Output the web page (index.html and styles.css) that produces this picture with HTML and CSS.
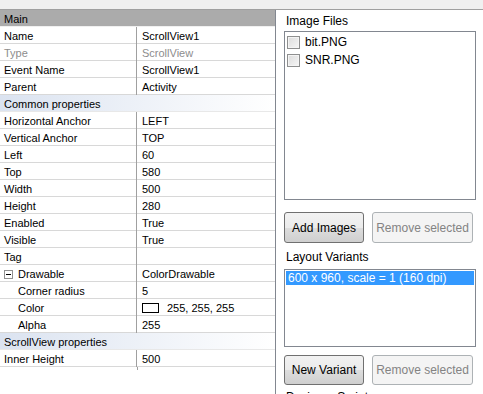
FILE: index.html
```html
<!DOCTYPE html>
<html lang="en">
<head>
    <meta charset="UTF-8">
    <title>Designer - Properties</title>
    <link rel="stylesheet" href="styles.css">
</head>
<body>
<div class="topbar"></div>
<div class="main">
    <div class="props">
        <div class="row header"><span>Main</span></div>
        <div class="row"><div class="key">Name</div><div class="val">ScrollView1</div></div>
        <div class="row disabled"><div class="key">Type</div><div class="val">ScrollView</div></div>
        <div class="row"><div class="key">Event Name</div><div class="val">ScrollView1</div></div>
        <div class="row"><div class="key">Parent</div><div class="val">Activity</div></div>
        <div class="row category"><span>Common properties</span></div>
        <div class="row"><div class="key">Horizontal Anchor</div><div class="val">LEFT</div></div>
        <div class="row"><div class="key">Vertical Anchor</div><div class="val">TOP</div></div>
        <div class="row"><div class="key">Left</div><div class="val">60</div></div>
        <div class="row"><div class="key">Top</div><div class="val">580</div></div>
        <div class="row"><div class="key">Width</div><div class="val">500</div></div>
        <div class="row"><div class="key">Height</div><div class="val">280</div></div>
        <div class="row"><div class="key">Enabled</div><div class="val">True</div></div>
        <div class="row"><div class="key">Visible</div><div class="val">True</div></div>
        <div class="row"><div class="key">Tag</div><div class="val"></div></div>
        <div class="row">
            <div class="key">
                <svg class="toggle" width="9" height="9" viewBox="0 0 9 9"><rect x="0.5" y="0.5" width="8" height="8" fill="#fff" stroke="#919191"/><path d="M2 4.5h5" stroke="#000"/></svg>
                Drawable
            </div>
            <div class="val">ColorDrawable</div>
        </div>
        <div class="row"><div class="key sub">Corner radius</div><div class="val">5</div></div>
        <div class="row"><div class="key sub">Color</div><div class="val"><span class="swatch"></span>255, 255, 255</div></div>
        <div class="row"><div class="key sub">Alpha</div><div class="val">255</div></div>
        <div class="row category"><span>ScrollView properties</span></div>
        <div class="row"><div class="key">Inner Height</div><div class="val">500</div></div>
        <div class="tail"></div>
    </div>

    <div class="side">
        <div class="label first">Image Files</div>
        <div class="listbox files">
            <div class="check-item"><span class="checkbox"></span>bit.PNG</div>
            <div class="check-item"><span class="checkbox"></span>SNR.PNG</div>
        </div>
        <div class="buttons first-buttons">
            <button class="btn">Add Images</button>
            <button class="btn" disabled>Remove selected</button>
        </div>
        <div class="label">Layout Variants</div>
        <div class="listbox variants">
            <div class="item selected">600 x 960, scale = 1 (160 dpi)</div>
        </div>
        <div class="buttons">
            <button class="btn">New Variant</button>
            <button class="btn" disabled>Remove selected</button>
        </div>
        <div class="label last">Designer Scripts</div>
    </div>
</div>
</body>
</html>
```

FILE: styles.css
```css
body {
    margin: 0;
    background: #fff;
    font-family: "Liberation Sans", Arial, sans-serif;
    font-size: 11px;
    color: #000;
    overflow: hidden;
    height: 394px;
}
.topbar {
    height: 9px;
    background: #f0f0f0;
    border-bottom: 1px solid #a0a0a0;
}
.main {
    display: flex;
    height: 384px;
}
.props {
    width: 275px;
    border-right: 1px solid #828790;
    display: flex;
    flex-direction: column;
}
.row {
    display: grid;
    grid-template-columns: 137px 1fr;
    height: 17px;
    box-sizing: border-box;
    line-height: 16px;
    border-bottom: 1px solid #d8d8d8;
    white-space: nowrap;
    flex: none;
}
.row.header,
.row.category {
    display: block;
    padding: 1px 0 0 4px;
}
.row.header {
    background: #ababab;
    border-bottom-color: #f0f0f0;
}
.row.category {
    background: linear-gradient(to right, #dbe3f0, #fff);
    border-bottom-color: #e8e8e8;
}
.key {
    padding: 1px 0 0 4px;
    border-right: 1px solid #a0a0a0;
    display: flex;
    align-items: center;
}
.key.sub {
    padding-left: 18px;
}
.toggle {
    margin-right: 5px;
}
.val {
    padding: 1px 0 0 5px;
    display: flex;
    align-items: center;
}
.disabled {
    color: #8d8d8d;
}
.swatch {
    width: 17px;
    height: 10px;
    border: 1px solid #000;
    background: #fff;
    margin-right: 8px;
    box-sizing: border-box;
}
.tail {
    width: 137px;
    height: 3px;
    border-right: 1px solid #a0a0a0;
}
.side {
    flex: 1;
    padding-left: 8px;
    font-size: 12px;
}
.label {
    line-height: 16px;
    padding-left: 2px;
    margin-top: 6px;
}
.label.first {
    margin-top: 3px;
}
.label.last {
    margin-top: 4px;
}
.listbox {
    width: 192px;
    box-sizing: border-box;
    border: 1px solid #828790;
    margin-top: 4px;
    padding: 1px;
}
.files {
    height: 169px;
    margin-top: 2px;
}
.variants {
    height: 78px;
}
.check-item {
    display: flex;
    align-items: center;
    height: 18px;
    padding-left: 1px;
}
.checkbox {
    width: 13px;
    height: 13px;
    box-sizing: border-box;
    border: 1px solid #8e8f8f;
    background: linear-gradient(135deg, #dcdcdc, #f6f6f6);
    box-shadow: inset 0 0 0 1px #f4f4f4;
    margin-right: 5px;
}
.item {
    height: 14px;
    line-height: 14px;
    padding-left: 2px;
}
.item.selected {
    background: #3399ff;
    color: #fff;
}
.buttons {
    display: flex;
    gap: 8px;
    margin-top: 8px;
}
.first-buttons {
    margin-top: 12px;
}
.btn {
    height: 31px;
    font-family: "Liberation Sans", Arial, sans-serif;
    font-size: 12px;
    color: #000;
    border: 1px solid #707070;
    border-radius: 3px;
    background: linear-gradient(#f2f2f2 0%, #ebebeb 50%, #dddddd 51%, #cfcfcf 100%);
    padding: 0;
    width: 80px;
}
.btn:disabled {
    width: 101px;
    color: #838383;
    border-color: #adb2b5;
    background: #f4f4f4;
}
.buttons:not(.first-buttons) .btn {
    height: 30px;
}
```
